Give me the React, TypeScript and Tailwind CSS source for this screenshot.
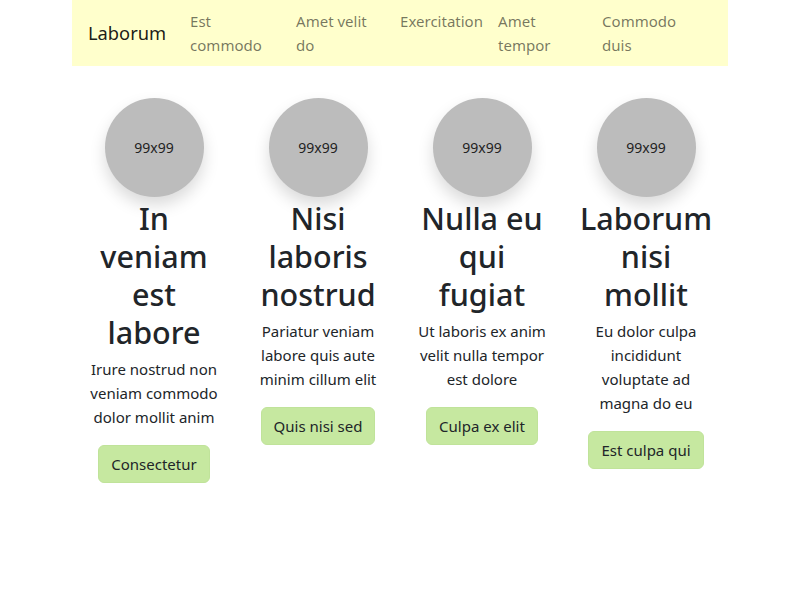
const links = [
  { label: "Est commodo", w: "w-[106px]" },
  { label: "Amet velit do", w: "w-[104px]" },
  { label: "Exercitation", w: "w-[98px]" },
  { label: "Amet tempor", w: "w-[104px]" },
  { label: "Commodo duis", w: "w-[117px]" },
];

const cols = [
  {
    title: "In veniam est labore",
    text: "Irure nostrud non veniam commodo dolor mollit anim",
    cta: "Consectetur",
  },
  {
    title: "Nisi laboris nostrud",
    text: "Pariatur veniam labore quis aute minim cillum elit",
    cta: "Quis nisi sed",
  },
  {
    title: "Nulla eu qui fugiat",
    text: "Ut laboris ex anim velit nulla tempor est dolore",
    cta: "Culpa ex elit",
  },
  {
    title: "Laborum nisi mollit",
    text: "Eu dolor culpa incididunt voluptate ad magna do eu",
    cta: "Est culpa qui",
  },
];

export default function App() {
  return (
    <div className="min-h-[600px] bg-white text-[#212529] font-['Noto_Sans',sans-serif]">
      <div className="w-[656px] mx-auto">
        {/* navbar */}
        <nav className="h-[66px] bg-[#ffffcc] flex items-center px-4">
          <span className="text-[18.3px] text-black/90 mr-4 leading-[30px]">Laborum</span>
          <div className="flex items-start">
            {links.map((l) => (
              <a key={l.label} className={`${l.w} px-2 text-[15px] leading-6 text-black/55`}>
                {l.label}
              </a>
            ))}
          </div>
        </nav>

        {/* columns */}
        <div className="grid grid-cols-4 mt-8">
          {cols.map((c) => (
            <div key={c.title} className="px-3 flex flex-col items-center text-center">
              <div className="w-[99px] h-[99px] rounded-full bg-[#bcbcbc] shadow-[0_8px_16px_rgba(0,0,0,0.15)] flex items-center justify-center text-[14px] text-[#222]">
                99x99
              </div>
              <h2 className="mt-[2px] text-[30.5px] leading-[38px] font-medium mb-[6px]">{c.title}</h2>
              <p className="text-[15px] leading-6 mb-4">{c.text}</p>
              <button className="px-3 py-1.5 text-[15px] leading-6 bg-[#c6e8a0] border border-[#c0e39a] rounded-md text-[#212529]">
                {c.cta}
              </button>
            </div>
          ))}
        </div>
      </div>
    </div>
  );
}
